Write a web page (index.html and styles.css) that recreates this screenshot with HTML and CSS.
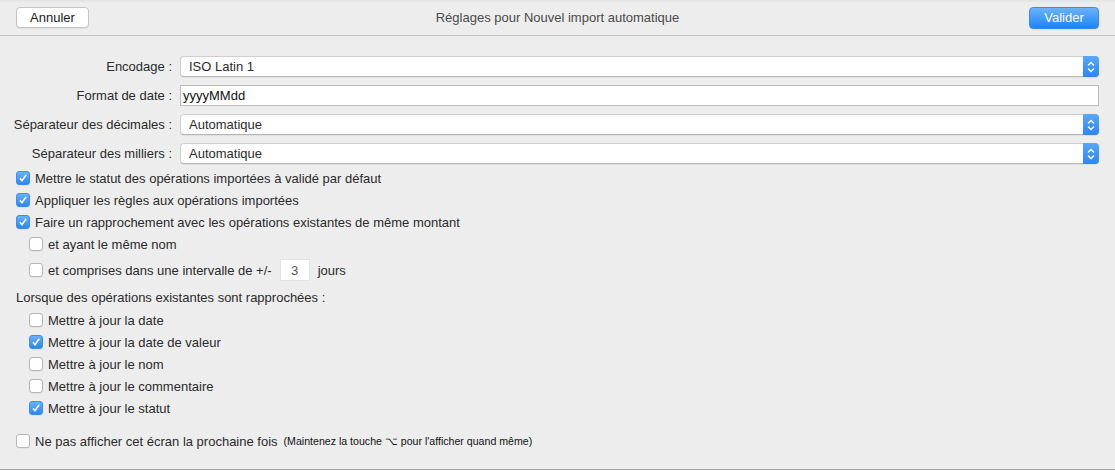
FILE: index.html
```html
<!DOCTYPE html>
<html>
<head>
  <meta charset="UTF-8">
  <title>Réglages pour Nouvel import automatique</title>
  <link rel="stylesheet" href="styles.css">
</head>
<body>
<div class="sheet">
  <div class="header">
    <div class="left"><button class="btn">Annuler</button></div>
    <div class="title">Réglages pour Nouvel import automatique</div>
    <div class="right"><button class="btn primary">Valider</button></div>
  </div>

  <div class="form">
    <div class="field">
      <label>Encodage :</label>
      <div class="select">ISO Latin 1<span class="arrows"><svg width="8" height="12" viewBox="0 0 8 12"><path d="M1 4.5 L4 1.5 L7 4.5 M1 7.5 L4 10.5 L7 7.5" fill="none" stroke="#fff" stroke-width="1.3"/></svg></span></div>
    </div>
    <div class="field">
      <label>Format de date :</label>
      <div class="input">yyyyMMdd</div>
    </div>
    <div class="field">
      <label>Séparateur des décimales :</label>
      <div class="select">Automatique<span class="arrows"><svg width="8" height="12" viewBox="0 0 8 12"><path d="M1 4.5 L4 1.5 L7 4.5 M1 7.5 L4 10.5 L7 7.5" fill="none" stroke="#fff" stroke-width="1.3"/></svg></span></div>
    </div>
    <div class="field">
      <label>Séparateur des milliers :</label>
      <div class="select">Automatique<span class="arrows"><svg width="8" height="12" viewBox="0 0 8 12"><path d="M1 4.5 L4 1.5 L7 4.5 M1 7.5 L4 10.5 L7 7.5" fill="none" stroke="#fff" stroke-width="1.3"/></svg></span></div>
    </div>

    <div class="check first"><span class="box on"></span>Mettre le statut des opérations importées à validé par défaut</div>
    <div class="check"><span class="box on"></span>Appliquer les règles aux opérations importées</div>
    <div class="check"><span class="box on"></span>Faire un rapprochement avec les opérations existantes de même montant</div>
    <div class="check sub"><span class="box"></span>et ayant le même nom</div>
    <div class="check sub tall"><span class="box"></span>et comprises dans une intervalle de +/- <span class="num">3</span> jours</div>

    <div class="heading">Lorsque des opérations existantes sont rapprochées :</div>
    <div class="check sub"><span class="box"></span>Mettre à jour la date</div>
    <div class="check sub"><span class="box on"></span>Mettre à jour la date de valeur</div>
    <div class="check sub"><span class="box"></span>Mettre à jour le nom</div>
    <div class="check sub"><span class="box"></span>Mettre à jour le commentaire</div>
    <div class="check sub"><span class="box on"></span>Mettre à jour le statut</div>

    <div class="check last"><span class="box"></span>Ne pas afficher cet écran la prochaine fois <small>(Maintenez la touche ⌥ pour l'afficher quand même)</small></div>
  </div>
</div>
</body>
</html>
```

FILE: styles.css
```css
body {
  margin: 0;
  background: #ececec;
  font-family: "Liberation Sans", Arial, sans-serif;
  font-size: 13px;
  color: #2b2b2b;
}
.sheet {
  height: 469px;
  border-bottom: 1px solid #a9a9a9;
  background: linear-gradient(#e2e2e2, #ededed 3px);
}
.header {
  height: 35px;
  border-bottom: 1px solid #c6c6c6;
  display: grid;
  grid-template-columns: 1fr auto 1fr;
  align-items: center;
  padding: 0 16px;
}
.header .right {
  text-align: right;
}
.title {
  color: #4a4a4a;
}
.btn {
  font-family: inherit;
  font-size: 13px;
  height: 21px;
  padding: 0 11px;
  border-radius: 4px;
  border: 1px solid #c4c4c4;
  background: #fff;
  color: #222;
  box-shadow: 0 1px 0 rgba(0, 0, 0, 0.06);
}
.header .left .btn {
  width: 73px;
}
.btn.primary {
  width: 70px;
  height: 22px;
  border-color: #3a88f2;
  background: linear-gradient(#6cb3fb, #1c83fa);
  color: #fff;
}
.form {
  padding: 20px 16px 0 16px;
}
.field {
  display: grid;
  grid-template-columns: 166px 1fr;
  column-gap: 8px;
  align-items: center;
  height: 21px;
  margin-bottom: 8px;
  margin-left: -10px;
}
.field label {
  text-align: right;
  white-space: nowrap;
}
.select {
  position: relative;
  height: 21px;
  line-height: 20px;
  box-sizing: border-box;
  padding-left: 8px;
  background: #fff;
  border: 1px solid #cfcfcf;
  border-bottom-color: #b7b7b7;
  border-radius: 4px;
  box-shadow: 0 1px 0 rgba(0, 0, 0, 0.05);
}
.arrows {
  position: absolute;
  right: -1px;
  top: -1px;
  width: 16px;
  height: 21px;
  border-radius: 0 4px 4px 0;
  background: linear-gradient(#5aa7fb, #2c85f7);
  display: flex;
  align-items: center;
  justify-content: center;
}
.input {
  height: 21px;
  line-height: 20px;
  box-sizing: border-box;
  padding-left: 2px;
  background: #fff;
  border: 1px solid #bdbdbd;
  color: #111;
}
.check {
  display: flex;
  align-items: center;
  height: 22px;
}
.check.first {
  margin-top: -5px;
}
.check.sub {
  padding-left: 13px;
}
.check.tall {
  height: 30px;
  margin-bottom: 2px;
}
.check.last {
  margin-top: 11px;
}
.box {
  width: 12px;
  height: 12px;
  margin-right: 5px;
  border: 1px solid #b5b5b5;
  border-radius: 3px;
  background: #fff;
  box-shadow: 0 1px 0 rgba(0, 0, 0, 0.04);
  flex: none;
}
.box.on {
  border-color: #3b8df3;
  background: linear-gradient(#67b0fb, #2d86f7);
  background-image: url("data:image/svg+xml,%3Csvg xmlns='http://www.w3.org/2000/svg' width='12' height='12'%3E%3Cpath d='M3 6.3 L5 8.8 L9.2 2.8' fill='none' stroke='white' stroke-width='1.5'/%3E%3C/svg%3E"), linear-gradient(#67b0fb, #2d86f7);
}
.num {
  display: inline-block;
  width: 30px;
  height: 22px;
  line-height: 22px;
  box-sizing: border-box;
  margin: 0 8px 0 8px;
  background: #fff;
  border: 1px solid #e4e4e4;
  text-align: center;
  color: #555;
}
.heading {
  height: 22px;
  line-height: 22px;
}
small {
  font-size: 10.6px;
  margin-left: 6px;
  color: #111;
}
```
